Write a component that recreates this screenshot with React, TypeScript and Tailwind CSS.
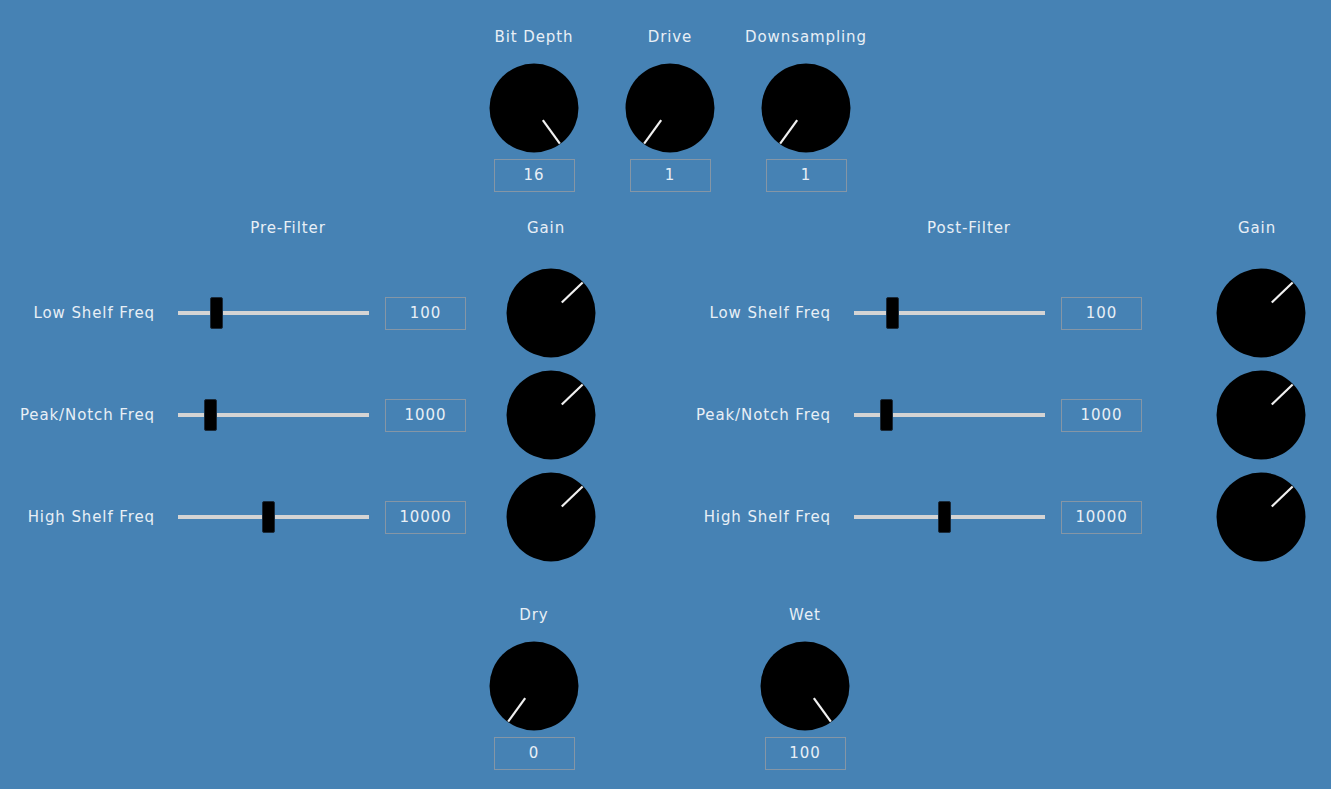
type KnobProps = { angle: number }

function Knob({ angle }: KnobProps) {
  const rad = (angle * Math.PI) / 180
  const sx = Math.sin(rad)
  const sy = -Math.cos(rad)
  return (
    <svg width="90" height="90" viewBox="0 0 90 90" className="block shrink-0">
      <circle cx="45" cy="45" r="44.5" fill="#000" />
      <line
        x1={45 + sx * 15}
        y1={45 + sy * 15}
        x2={45 + sx * 44}
        y2={45 + sy * 44}
        stroke="#f0f0f0"
        strokeWidth="2.2"
      />
    </svg>
  )
}

function ValueBox({ value }: { value: string }) {
  return (
    <div className="w-[81px] h-[33px] border border-[#8596a6] flex items-center justify-center">
      {value}
    </div>
  )
}

function KnobBlock({ label, value, angle }: { label: string; value: string; angle: number }) {
  return (
    <div className="w-[136px] flex flex-col items-center">
      <div className="h-[20px] leading-[20px] whitespace-nowrap">{label}</div>
      <div className="mt-[16px]">
        <Knob angle={angle} />
      </div>
      <div className="mt-[6px]">
        <ValueBox value={value} />
      </div>
    </div>
  )
}

function Slider({ pos }: { pos: number }) {
  return (
    <div className="relative w-[191px] h-[32px] flex items-center">
      <div className="w-full h-[4px] bg-[#d4d4d4]" />
      <div
        className="absolute top-0 w-[13px] h-[32px] bg-black border border-[#1a2a3a] rounded-[2px]"
        style={{ left: pos - 6 }}
      />
    </div>
  )
}

type Row = { label: string; value: string; pos: number }

const rows: Row[] = [
  { label: 'Low Shelf Freq', value: '100', pos: 38 },
  { label: 'Peak/Notch Freq', value: '1000', pos: 32 },
  { label: 'High Shelf Freq', value: '10000', pos: 90 },
]

function FilterSection({ title, knobGap, titleOffset, gainOffset }: { title: string; knobGap: string; titleOffset: string; gainOffset: string }) {
  return (
    <div className="flex flex-col">
      {/* headings */}
      <div className="relative h-[20px] leading-[20px]">
        <span className={`absolute top-0 -translate-x-1/2 whitespace-nowrap ${titleOffset}`}>{title}</span>
        <span className={`absolute top-0 -translate-x-1/2 ${gainOffset}`}>Gain</span>
      </div>
      <div className="mt-[30px] flex flex-col gap-[12px]">
        {rows.map((r) => (
          <div key={r.label} className="flex items-center h-[90px]">
            <div className="w-[155px] text-right whitespace-nowrap">{r.label}</div>
            <div className="ml-[23px]">
              <Slider pos={r.pos} />
            </div>
            <div className="ml-[16px]">
              <ValueBox value={r.value} />
            </div>
            <div className={knobGap}>
              <Knob angle={46} />
            </div>
          </div>
        ))}
      </div>
    </div>
  )
}

export default function App() {
  return (
    <div
      className="w-[1331px] h-[789px] bg-[#4682b4] text-[#e8eff6] text-[15px] tracking-[0.9px] overflow-hidden"
      style={{ fontFamily: '"DejaVu Sans", Verdana, sans-serif' }}
    >
      {/* top knobs */}
      <div className="pt-[27px] pl-[466px] flex">
        <KnobBlock label="Bit Depth" value="16" angle={144} />
        <KnobBlock label="Drive" value="1" angle={-144} />
        <KnobBlock label="Downsampling" value="1" angle={-144} />
      </div>

      {/* filters */}
      <div className="mt-[26px] flex">
        <FilterSection title="Pre-Filter" knobGap="ml-[40px]" titleOffset="left-[288px]" gainOffset="left-[546px]" />
        <div className="ml-[80px]">
          <FilterSection title="Post-Filter" knobGap="ml-[74px]" titleOffset="left-[293px]" gainOffset="left-[581px]" />
        </div>
      </div>

      {/* dry / wet */}
      <div className="mt-[43px] pl-[466px] flex">
        <KnobBlock label="Dry" value="0" angle={-144} />
        <div className="ml-[135px]">
          <KnobBlock label="Wet" value="100" angle={144} />
        </div>
      </div>
    </div>
  )
}
